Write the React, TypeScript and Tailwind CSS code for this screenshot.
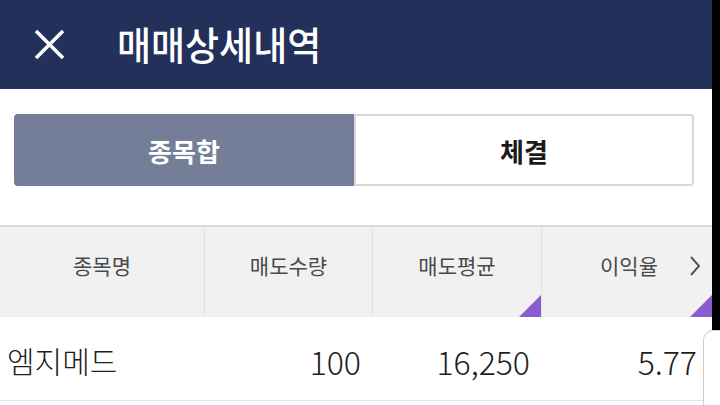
import React from "react";

const font = { fontFamily: '"Noto Sans CJK KR", "Noto Sans", sans-serif' };

function Tri() {
  return (
    <svg className="absolute right-0 bottom-0" width="22" height="22" viewBox="0 0 22 22">
      <polygon points="22,0 22,22 0,22" fill="#8a5cd0" />
    </svg>
  );
}

export default function App() {
  return (
    <div className="flex w-[720px] h-[405px] overflow-hidden bg-black" style={font}>
      <div className="relative w-[712px] h-full bg-white flex flex-col">
        {/* Header */}
        <div className="h-[89px] bg-[#22305a] flex items-center shrink-0">
          <div className="ml-[33px] w-[33px] h-[33px] flex items-center justify-center">
            <svg width="33" height="33" viewBox="0 0 33 33">
              <line x1="3" y1="3" x2="30" y2="30" stroke="white" strokeWidth="3.6" />
              <line x1="30" y1="3" x2="3" y2="30" stroke="white" strokeWidth="3.6" />
            </svg>
          </div>
          <div className="ml-[51px] text-[37px] leading-none font-medium text-white pb-[2px] scale-y-[1.06]">
            매매상세내역
          </div>
        </div>

        {/* Tabs */}
        <div className="mt-[25px] mx-[14px] h-[72px] flex shrink-0 w-[680px]">
          <div className="w-[340px] h-full bg-[#747e99] rounded-l-[4px] flex items-center justify-center text-white text-[26px] font-bold">
            종목합
          </div>
          <div className="w-[340px] h-full bg-white border-2 border-[#d8d8d8] rounded-r-[4px] flex items-center justify-center text-[#1a1a1a] text-[26px] font-bold">
            체결
          </div>
        </div>

        {/* Table header */}
        <div className="mt-[39px] border-t-2 border-[#dadada] h-[92px] bg-[#f1f1f1] flex shrink-0 text-[21px] text-[#4a4a4a]">
          <div className="w-[205px] flex items-center justify-center pb-[12px] border-r border-[#e2e2e2]">
            종목명
          </div>
          <div className="w-[168px] flex items-center justify-center pb-[12px] border-r border-[#e2e2e2]">
            매도수량
          </div>
          <div className="relative w-[169px] flex items-center justify-center pb-[12px] border-r border-[#e2e2e2]">
            매도평균
            <Tri />
          </div>
          <div className="relative w-[170px] flex items-center justify-end pr-[11px] pb-[12px]">
            <span className="mr-[31px]">이익율</span>
            <svg width="12" height="22" viewBox="0 0 12 22">
              <polyline points="2,2 10,11 2,20" fill="none" stroke="#555555" strokeWidth="2" />
            </svg>
            <Tri />
          </div>
        </div>

        {/* Data row */}
        <div className="h-[84px] flex items-center border-b border-[#e2e2e2] shrink-0 font-light text-[#1e1e1e]">
          <div className="w-[205px] pl-[7px] pt-[4px] text-[30px]">엠지메드</div>
          <div className="w-[168px] text-right pr-[12px] pt-[4px] text-[32px]">100</div>
          <div className="w-[169px] text-right pr-[12px] pt-[4px] text-[32px]">16,250</div>
          <div className="w-[170px] text-right pr-[15px] pt-[4px] text-[32px]">5.77</div>
        </div>

        <div className="absolute left-[703px] top-[330px] w-[20px] h-[90px] border-l border-t border-[#cfcfcf] rounded-tl-[10px] bg-white" />
      </div>
      <div className="w-[8px] h-full bg-black" />
    </div>
  );
}
